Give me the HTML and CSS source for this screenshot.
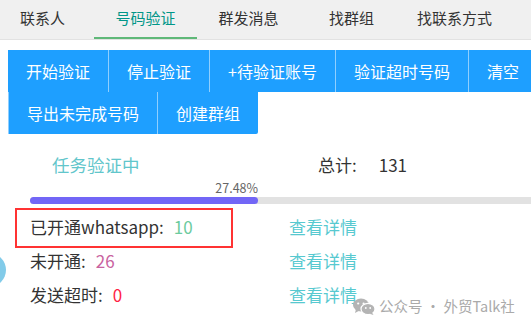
FILE: index.html
```html
<!DOCTYPE html>
<html lang="zh-CN">
<head>
    <meta charset="UTF-8">
    <meta name="viewport" content="width=device-width, initial-scale=1.0">
    <title>号码验证</title>
    <link rel="stylesheet" href="styles.css">
</head>
<body>

    <div class="tabs">
        <ul class="tab-title">
            <li>联系人</li>
            <li class="active">号码验证</li>
            <li>群发消息</li>
            <li>找群组</li>
            <li>找联系方式</li>
        </ul>
    </div>

    <div class="panel">
        <div class="btn-group">
            <button>开始验证</button>
            <button>停止验证</button>
            <button>+待验证账号</button>
            <button>验证超时号码</button>
            <button>清空</button>
            <button class="row-start">导出未完成号码</button>
            <button>创建群组</button>
        </div>

        <div class="status">
            <span class="state">任务验证中</span>
            <span class="total">总计:<span class="total-num">131</span></span>
        </div>

        <div class="progress">
            <div class="progress-bar">
                <div class="progress-fill" style="width: 27.48%">
                    <span class="progress-text">27.48%</span>
                </div>
            </div>
        </div>

        <div class="stats">
            <div class="stat marked">已开通whatsapp:<span class="num green">10</span></div>
            <a class="detail">查看详情</a>
            <div class="stat">未开通:<span class="num pink">26</span></div>
            <a class="detail">查看详情</a>
            <div class="stat">发送超时:<span class="num red">0</span></div>
            <a class="detail">查看详情</a>
        </div>
    </div>

    <div class="float-ball"></div>

    <div class="watermark">
        <svg width="22" height="17" viewBox="0 0 22 17">
            <ellipse cx="8" cy="7" rx="8" ry="6.5" fill="#b4b4b4"/>
            <path d="M3 11 L2 15 L6.5 12.5 Z" fill="#b4b4b4"/>
            <circle cx="5.2" cy="5.5" r="1.1" fill="#fff"/>
            <circle cx="10.6" cy="5.5" r="1.1" fill="#fff"/>
            <ellipse cx="15" cy="11" rx="7" ry="5.6" fill="#b4b4b4" stroke="#fff" stroke-width="1.2"/>
            <path d="M19 14.5 L20.5 17 L16.5 15.8 Z" fill="#b4b4b4"/>
            <circle cx="12.8" cy="10" r="0.9" fill="#fff"/>
            <circle cx="17.2" cy="10" r="0.9" fill="#fff"/>
        </svg>
        <span>公众号 · 外贸Talk社</span>
    </div>

</body>
</html>
```

FILE: styles.css
```css
/* page */

html,
body {
overflow: hidden;
}

body {
margin: 0;
font-family: "Noto Sans CJK SC", "Liberation Sans", sans-serif;
color: #333;
background-color: #fff;
width: 531px;
height: 329px;
position: relative;
}

/* tabs */

.tabs {
background-color: #f0f0f0;
border-bottom: 1px solid #e2e2e2;
height: 39px;
}

.tab-title {
display: flex;
margin: 0 0 0 -9px;
padding: 0;
list-style: none;
}

.tab-title li {
width: 103px;
height: 39px;
line-height: 36px;
text-align: center;
font-size: 15px;
color: #333;
box-sizing: border-box;
}

.tab-title li.active {
color: #009688;
border-bottom: 2px solid #5fb878;
}

/* buttons */

.panel {
padding: 10px 0 0 8px;
}

.btn-group {
display: flex;
flex-wrap: wrap;
width: 600px;
}

.btn-group button {
height: 42px;
padding: 0 18px;
border: none;
border-left: 1px solid rgba(255, 255, 255, 0.5);
background-color: #1e9fff;
color: #fff;
font-family: inherit;
font-size: 16px;
cursor: pointer;
}

.btn-group button:first-child {
border-left: none;
}

.btn-group button:nth-child(5) {
margin-right: 60px;
}

.btn-group button:last-child {
border-radius: 0 0 2px 0;
}

/* status */

.status {
display: flex;
margin-top: 19px;
height: 24px;
line-height: 24px;
font-size: 17px;
}

.state {
color: #62c6cb;
margin-left: 44px;
width: 266px;
font-size: 17.5px;
}

.total-num {
margin-left: 22px;
}

/* progress */

.progress {
margin: 4px 0 0 22px;
}

.progress-bar {
width: 830px;
height: 7px;
border-radius: 4px;
background-color: #e2e2e2;
margin-top: 20px;
}

.progress-fill {
position: relative;
height: 7px;
border-radius: 4px;
background-color: #7266f6;
}

.progress-text {
position: absolute;
right: 0;
top: -17px;
font-size: 12.5px;
line-height: 16px;
color: #666;
}

/* stats */

.stats {
display: grid;
grid-template-columns: 259px 1fr;
margin: 6px 0 0 22px;
font-size: 17px;
line-height: 34px;
}

.stat {
position: relative;
}

.stat.marked::before {
content: "";
position: absolute;
left: -15px;
top: -2px;
width: 218px;
height: 40px;
border: 2px solid #ff3333;
box-sizing: border-box;
}

.num {
margin-left: 10px;
}

.green {
color: #6ccb9e;
}

.pink {
color: #c9639f;
}

.red {
color: #ff1f46;
}

.detail {
color: #57c9d0;
cursor: pointer;
}

/* overlays */

.float-ball {
position: absolute;
left: -28px;
top: 253px;
width: 34px;
height: 34px;
border-radius: 50%;
background-color: #82cbe9;
}

.watermark {
position: absolute;
left: 353px;
top: 296px;
display: flex;
align-items: center;
gap: 4px;
font-size: 14.5px;
line-height: 20px;
color: #aaa;
}
```
